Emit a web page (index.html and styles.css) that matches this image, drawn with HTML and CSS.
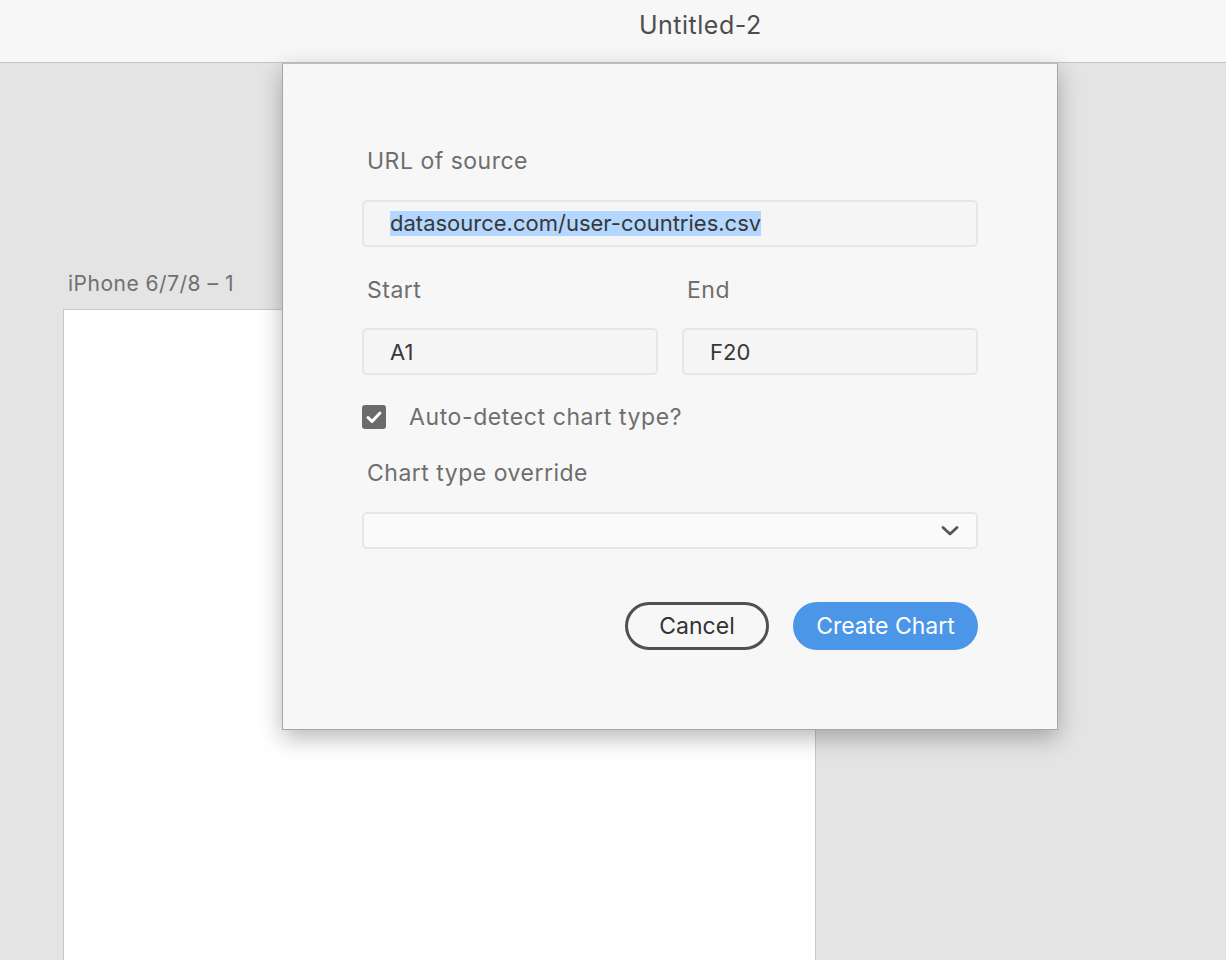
FILE: index.html
```html
<!DOCTYPE html>
<html>
<head>
<meta charset="utf-8">
<link rel="stylesheet" href="styles.css">
</head>
<body>
<header class="topbar"><span class="doc-title">Untitled-2</span></header>
<main class="canvas">
  <div class="artboard-label">iPhone 6/7/8 – 1</div>
  <div class="artboard"></div>
  <section class="dialog">
    <div class="label">URL of source</div>
    <div class="field field-url"><span class="selected">datasource.com/user-countries.csv</span></div>
    <div class="range-row">
      <div class="range-col">
        <div class="label">Start</div>
        <div class="field field-range">A1</div>
      </div>
      <div class="range-col">
        <div class="label">End</div>
        <div class="field field-range">F20</div>
      </div>
    </div>
    <div class="check-row">
      <span class="checkbox"><svg width="24" height="24" viewBox="0 0 24 24"><path d="M6 12.5 L10 16.5 L18 8" fill="none" stroke="#fff" stroke-width="3" stroke-linecap="round" stroke-linejoin="round"/></svg></span>
      <span class="check-label">Auto-detect chart type?</span>
    </div>
    <div class="label label-override">Chart type override</div>
    <div class="select">
      <svg class="chevron" width="18" height="12" viewBox="0 0 18 12"><path d="M2 2.5 L9 9 L16 2.5" fill="none" stroke="#555" stroke-width="2.8" stroke-linecap="round" stroke-linejoin="round"/></svg>
    </div>
    <div class="actions">
      <button class="btn btn-cancel">Cancel</button>
      <button class="btn btn-primary">Create Chart</button>
    </div>
  </section>
</main>
</body>
</html>
```
FILE: styles.css
```css
* { box-sizing: border-box; }
html, body { margin: 0; padding: 0; }
body {
  width: 1226px;
  height: 960px;
  overflow: hidden;
  background: #e4e4e4;
  font-family: "Inter", "Liberation Sans", Arial, sans-serif;
  position: relative;
}
.topbar {
  height: 63px;
  background: #f7f7f7;
  border-bottom: 1px solid #c4c4c4;
  display: flex;
  align-items: center;
  padding-left: 639px;
}
.doc-title {
  font-size: 25px;
  letter-spacing: 0.5px;
  color: #4e4e4e;
  line-height: 28px;
  margin-top: -13px;
}
.canvas {
  position: relative;
  padding-top: 209px;
  padding-left: 63px;
}
.artboard-label {
  font-size: 21px;
  letter-spacing: 0.5px;
  line-height: 24px;
  color: #707070;
  padding-left: 5px;
  height: 37px;
}
.artboard {
  width: 753px;
  height: 660px;
  background: #fff;
  border: 1px solid #c8c8c8;
}
.dialog {
  position: absolute;
  top: 0;
  left: 282px;
  width: 776px;
  height: 667px;
  background: #f7f7f7;
  border: 1px solid #a6a6a6;
  border-top-color: #bdbdbd;
  box-shadow: 0 8px 22px rgba(0,0,0,0.28);
  padding: 84px 79px 0 79px;
  display: flex;
  flex-direction: column;
}
.label {
  font-size: 23px;
  letter-spacing: 0.5px;
  line-height: 26px;
  color: #6e6e6e;
  padding-left: 5px;
}
.field {
  height: 47px;
  border: 2px solid #e6e6e6;
  border-radius: 5px;
  background: #f5f5f5;
  font-size: 22px;
  color: #383838;
  display: flex;
  align-items: center;
  padding-left: 26px;
}
.field-url { margin-top: 26px; }
.selected {
  background: #b3d7fe;
  line-height: 25px;
}
.range-row {
  display: flex;
  gap: 24px;
  margin-top: 30px;
}
.range-col {
  flex: 1;
  display: flex;
  flex-direction: column;
}
.field-range { margin-top: 25px; }
.check-row {
  display: flex;
  align-items: center;
  margin-top: 29px;
  height: 26px;
}
.checkbox {
  width: 24px;
  height: 24px;
  border-radius: 3px;
  background: #6b6b6b;
  display: flex;
}
.check-label {
  font-size: 23px;
  letter-spacing: 0.6px;
  color: #6e6e6e;
  margin-left: 23px;
  line-height: 26px;
}
.label-override { margin-top: 30px; }
.select {
  margin-top: 26px;
  height: 37px;
  border: 2px solid #e6e6e6;
  border-radius: 5px;
  background: #fafafa;
  display: flex;
  align-items: center;
  justify-content: flex-end;
  padding-right: 17px;
}
.actions {
  margin-top: 53px;
  display: flex;
  justify-content: flex-end;
  gap: 24px;
}
.btn {
  height: 48px;
  border-radius: 24px;
  font-family: inherit;
  font-size: 23px;
  padding: 0;
  cursor: pointer;
}
.btn-cancel {
  width: 144px;
  background: transparent;
  border: 3px solid #505050;
  color: #333;
}
.btn-primary {
  width: 185px;
  background: #4b96e6;
  border: none;
  color: #fff;
}
```
